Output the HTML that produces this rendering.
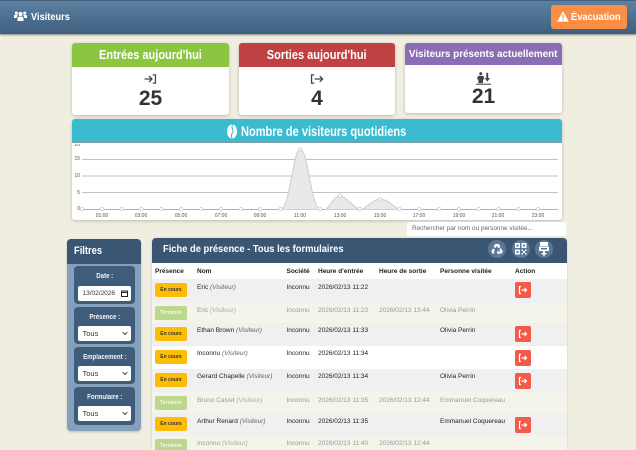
<!DOCTYPE html>
<html lang="fr"><head><meta charset="utf-8"><title>Visiteurs</title>
<style>
html,body{margin:0;padding:0}
body{width:636px;height:450px;overflow:hidden;background:#f0eee1;font-family:"Liberation Sans",sans-serif;position:relative;color:#222;filter:blur(.3px)}
div,svg,span{position:absolute;box-sizing:border-box}
.h{font-weight:700;color:#fff;white-space:nowrap;transform-origin:0 50%}
.card{background:#fff;border-radius:3px;box-shadow:0 1px 3px rgba(0,0,0,.22);overflow:hidden}
.card>.top{left:0;top:0;width:100%;text-align:center;color:#fff;font-weight:700;white-space:nowrap}
.t{display:inline-block;font-style:normal}
.num{left:0;width:100%;text-align:center;font-weight:700;font-size:21px;line-height:22px;color:#333}
.grp{left:6.5px;width:61.5px;background:#3f5c7b;border-radius:4px;text-align:center;color:#f2f4f7;font-weight:700;font-size:7px}
.grp>.l{left:0;width:100%;top:6px;line-height:9px;transform:scaleX(.87);white-space:nowrap}
.inp{left:4px;width:53.5px;height:15px;background:#fff;border-radius:2px;color:#333;font-weight:400;font-size:7.5px;line-height:15px;text-align:left;padding-left:5px}
.row{left:0;width:415px;font-size:6.5px;line-height:9px;white-space:nowrap}
.row span{top:var(--t);color:#222}
.row.fin span{color:#999}
.row em{color:#666}
.row.fin em{color:#aaa}
.b{left:3px;width:32px;border-radius:2px;font-size:5px;font-weight:700;text-align:center;height:14px;line-height:14px;top:var(--b)!important}
.row span.run{background:#fdbd07;color:#333}
.row.fin span.done{background:#bcd88e;color:#f2f6e8}
.act{left:363px;width:16px;height:16px;background:#f4594a;border-radius:2px;top:var(--a)}
.th{font-size:6.5px;font-weight:700;top:268px;color:#222;white-space:nowrap}
.xl{font-size:5px;color:#555;top:213px;width:20px;text-align:center}
.yl{font-size:5px;color:#555;left:72px;width:8px;text-align:right}
.ci{width:18px;height:18px;border-radius:50%;background:#5c7896;top:240px}
</style></head><body>

<div style="left:0;top:0;width:636px;height:34px;background:linear-gradient(#5c80a0,#3f5f80);border-top:1px solid #44607c;box-shadow:0 1px 2px rgba(0,0,0,.45)"></div>
<svg style="left:14px;top:11px" width="13" height="11" viewBox="0 0 13 11" fill="#fff"><circle cx="6.5" cy="3" r="2.1"/><circle cx="2.3" cy="2" r="1.5"/><circle cx="10.7" cy="2" r="1.5"/><path d="M3.5 10V7.5Q3.5 5.6 5.2 5.6H7.8Q9.5 5.6 9.5 7.5V10ZM0 7V5Q0 3.8 1.2 3.8H3.2L3.8 4.6Q2.6 5.4 2.6 7ZM13 7V5Q13 3.8 11.800 3.800H9.800L9.200 4.600Q10.400 5.400 10.400 7Z"/></svg>
<div class="h" style="left:31px;top:10px;font-size:10.5px;line-height:15px;transform:scaleX(.88)">Visiteurs</div>

<div style="left:551px;top:5px;width:76px;height:24px;background:#fb8e45;border-radius:3px"></div>
<svg style="left:557px;top:11px" width="12" height="11" viewBox="0 0 12 11"><path d="M6 .3 11.800 10.600H.2Z" fill="#fff"/><path d="M5.400 3.800h1.200v3.600H5.400zM5.400 8.200h1.200v1.200H5.400z" fill="#fb8e45"/></svg>
<div class="h" style="left:571px;top:10px;font-size:10px;line-height:15px;transform:scaleX(.93)">Évacuation</div>

<!-- cards -->
<div class="card" style="left:72px;top:43px;width:157px;height:72px">
  <div class="top" style="height:24px;background:#8cc640;font-size:12.5px;line-height:25px"><i class="t" style="transform:scaleX(.88)">Entrées aujourd'hui</i></div>
  <svg style="left:71px;top:31px" width="14" height="10" viewBox="0 0 14 11" fill="none" stroke="#444" stroke-width="1.400"><path d="M1 5.500H9M6 2.300 9.200 5.500 6 8.700M10 1H13V10H10"/></svg>
  <div class="num" style="top:45px">25</div>
</div>
<div class="card" style="left:239px;top:43px;width:156px;height:72px">
  <div class="top" style="height:24px;background:#c04141;font-size:12.5px;line-height:25px"><i class="t" style="transform:scaleX(.88)">Sorties aujourd'hui</i></div>
  <svg style="left:71px;top:31px" width="14" height="10" viewBox="0 0 14 11" fill="none" stroke="#444" stroke-width="1.400"><path d="M4 1H1V10H4M4.500 5.500H13M10 2.300 13.200 5.500 10 8.700"/></svg>
  <div class="num" style="top:45px">4</div>
</div>
<div class="card" style="left:405px;top:43px;width:157px;height:70px">
  <div class="top" style="height:22px;background:#8a6db5;font-size:10.400px;line-height:23px"><i class="t" style="transform:scaleX(.95)">Visiteurs présents actuellement</i></div>
  <svg style="left:71px;top:29px" width="15" height="13" viewBox="0 0 16 14" fill="#444"><circle cx="5" cy="1.800" r="1.600"/><path d="M2 4.200H8L9 8H7.500V12H2.500V8H1Z"/><path d="M11 1H13V6.500H15L12 10.500 9.500 6.500H11Z"/><rect x="0" y="12.600" width="16" height="1.100"/></svg>
  <div class="num" style="top:43px">21</div>
</div>

<!-- chart -->
<div class="card" style="left:72px;top:119px;width:490px;height:101px">
  <div class="top" style="height:24px;background:#3bbbcf;border-bottom:1px solid #7f9aa6;font-size:14px;line-height:25px;padding-left:14px"><i class="t" style="transform:scaleX(.79)">Nombre de visiteurs quotidiens</i></div>
</div>
<svg style="left:226px;top:124px" width="12" height="15" viewBox="0 0 12 16"><ellipse cx="6" cy="8" rx="5.400" ry="7.600" fill="#fff"/><path d="M6.800 .5C4 4 9 7 6.500 9.500 5 11 5.500 14 6 15.500" fill="none" stroke="#3bbbcf" stroke-width="1.100"/></svg>
<svg style="left:0;top:0" width="636" height="225" viewBox="0 0 636 225">
  <g stroke="#c2c2ca" stroke-width="1"><path d="M82 159.500H558M82 176H558M82 192.500H558"/></g>
  <path d="M82 209.500H558" stroke="#b0b0b8" stroke-width="1"/>
  <g fill="#e9e9ea" stroke="#cfcfda" stroke-width="1.100">
    <path d="M280.500 209.500C290 209 293 149 300.300 149 308 149 311 209 320.500 209.500Z"/>
    <path d="M326 209.500C332 203 335 196 340 196 345 196 352 205 359 209.500Z"/>
    <path d="M362 209.500C369 205 375 199 380 199 386 199 392 205 399 209.500Z"/>
  </g>
  <g fill="#fff" stroke="#cfcfd6" stroke-width=".9">
    <circle cx="82" cy="209" r="1.700"/><circle cx="102" cy="209" r="1.700"/><circle cx="121.700" cy="209" r="1.700"/><circle cx="141.500" cy="209" r="1.700"/><circle cx="161.400" cy="209" r="1.700"/><circle cx="181.200" cy="209" r="1.700"/><circle cx="201" cy="209" r="1.700"/><circle cx="221" cy="209" r="1.700"/><circle cx="240.800" cy="209" r="1.700"/><circle cx="260.500" cy="209" r="1.700"/><circle cx="280.500" cy="209" r="1.700"/><circle cx="300.300" cy="149.500" r="1.700"/><circle cx="320.200" cy="209" r="1.700"/><circle cx="340" cy="196" r="1.700"/><circle cx="359.800" cy="209" r="1.700"/><circle cx="379.800" cy="199.500" r="1.700"/><circle cx="399.500" cy="209" r="1.700"/><circle cx="419.300" cy="209" r="1.700"/><circle cx="439.200" cy="209" r="1.700"/><circle cx="459" cy="209" r="1.700"/><circle cx="478.800" cy="209" r="1.700"/><circle cx="498.700" cy="209" r="1.700"/><circle cx="518.500" cy="209" r="1.700"/><circle cx="538.300" cy="209" r="1.700"/>
  </g>
</svg>
<div class="yl" style="top:144px;height:2px;line-height:2px;overflow:hidden">20</div><div class="yl" style="top:156px">15</div><div class="yl" style="top:173px">10</div><div class="yl" style="top:190px">5</div><div class="yl" style="top:206px">0</div>
<div class="xl" style="left:92px">01:00</div><div class="xl" style="left:131px">03:00</div><div class="xl" style="left:171px">05:00</div><div class="xl" style="left:211px">07:00</div><div class="xl" style="left:250px">09:00</div><div class="xl" style="left:290px">11:00</div><div class="xl" style="left:330px">13:00</div><div class="xl" style="left:370px">15:00</div><div class="xl" style="left:409px">17:00</div><div class="xl" style="left:449px">19:00</div><div class="xl" style="left:488px">21:00</div><div class="xl" style="left:528px">23:00</div>

<!-- search -->
<div style="left:407px;top:222px;width:159px;height:14px;background:#fff;border-radius:2px;font-size:6.400px;line-height:14px;color:#666;padding-left:5px;white-space:nowrap">Rechercher par nom ou personne visitée...</div>

<!-- filters -->
<div style="left:67px;top:239px;width:74px;height:192px;background:#84a0bc;border-radius:4px;box-shadow:0 1px 2px rgba(0,0,0,.2)">
  <div style="left:0;top:0;width:74px;height:25px;background:#3a5672;border-radius:4px 4px 0 0"></div>
  <div class="h" style="left:7px;top:5px;font-size:11px;line-height:15px;transform:scaleX(.85)">Filtres</div>
  <div class="grp" style="top:27px;height:38px"><div class="l">Date :</div><div class="inp" style="top:20px;font-size:6.500px">13/02/2026
    <svg style="left:43px;top:4px" width="7" height="7" viewBox="0 0 7 7" fill="none" stroke="#222"><rect x=".5" y="1" width="6" height="5.500"/><path d="M.5 2.500H6.500"/></svg></div></div>
  <div class="grp" style="top:68px;height:37px"><div class="l">Présence :</div><div class="inp" style="top:19px">Tous
    <svg style="left:44px;top:5px" width="6" height="5" viewBox="0 0 6 5" fill="none" stroke="#444"><path d="M.7 1.200 3 3.500 5.300 1.200"/></svg></div></div>
  <div class="grp" style="top:108px;height:37px"><div class="l">Emplacement :</div><div class="inp" style="top:19px">Tous
    <svg style="left:44px;top:5px" width="6" height="5" viewBox="0 0 6 5" fill="none" stroke="#444"><path d="M.7 1.200 3 3.500 5.300 1.200"/></svg></div></div>
  <div class="grp" style="top:148px;height:38px"><div class="l">Formulaire :</div><div class="inp" style="top:19px">Tous
    <svg style="left:44px;top:5px" width="6" height="5" viewBox="0 0 6 5" fill="none" stroke="#444"><path d="M.7 1.200 3 3.500 5.300 1.200"/></svg></div></div>
</div>

<!-- table -->
<div style="left:152px;top:238px;width:415px;height:212px;background:#fff;border-radius:4px 4px 0 0;overflow:hidden;box-shadow:0 0 2px rgba(0,0,0,.15)">
  <div style="left:0;top:0;width:415px;height:25px;background:#3b5672"></div>
  <div style="left:0;top:41px;width:415px;height:171px;overflow:hidden">
    <div class="row" style="top:0;height:24px;background:#f0f0f0;--t:4px;--b:3.500px;--a:3px"><span class="b run" style="left:3px">En cours</span><span style="left:45px">Eric <em>(Visiteur)</em></span><span style="left:134.500px">Inconnu</span><span style="left:166px">2026/02/13 11:22</span><b class="act" style="position:absolute"></b></div>
    <div class="row fin" style="top:24px;height:20px;background:#f5f4ea;--t:3px;--b:3px"><span class="b done" style="left:3px">Terminée</span><span style="left:45px">Eric <em>(Visiteur)</em></span><span style="left:134.500px">Inconnu</span><span style="left:166px">2026/02/13 11:23</span><span style="left:227px">2026/02/13 13:44</span><span style="left:288px">Olivia Perrin</span></div>
    <div class="row" style="top:44px;height:23px;background:#f0f0f0;--t:3px;--b:3.500px;--a:3px"><span class="b run" style="left:3px">En cours</span><span style="left:45px">Ethan Brown <em>(Visiteur)</em></span><span style="left:134.500px">Inconnu</span><span style="left:166px">2026/02/13 11:33</span><span style="left:288px">Olivia Perrin</span><b class="act" style="position:absolute"></b></div>
    <div class="row" style="top:67px;height:23px;background:#fff;--t:3px;--b:3.500px;--a:3.500px"><span class="b run" style="left:3px">En cours</span><span style="left:45px">Inconnu <em>(Visiteur)</em></span><span style="left:134.500px">Inconnu</span><span style="left:166px">2026/02/13 11:34</span><b class="act" style="position:absolute"></b></div>
    <div class="row" style="top:90px;height:23px;background:#f0f0f0;--t:3px;--b:3.500px;--a:3.500px"><span class="b run" style="left:3px">En cours</span><span style="left:45px">Gerard Chapelle <em>(Visiteur)</em></span><span style="left:134.500px">Inconnu</span><span style="left:166px">2026/02/13 11:34</span><span style="left:288px">Olivia Perrin</span><b class="act" style="position:absolute"></b></div>
    <div class="row fin" style="top:113px;height:21px;background:#f5f4ea;--t:3.500px;--b:3.500px"><span class="b done" style="left:3px">Terminée</span><span style="left:45px">Bruno Calvet <em>(Visiteur)</em></span><span style="left:134.500px">Inconnu</span><span style="left:166px">2026/02/13 11:35</span><span style="left:227px">2026/02/13 12:44</span><span style="left:288px">Emmanuel Coquereau</span></div>
    <div class="row" style="top:134px;height:23px;background:#f0f0f0;--t:3.500px;--b:3.500px;--a:3.500px"><span class="b run" style="left:3px">En cours</span><span style="left:45px">Arthur Renard <em>(Visiteur)</em></span><span style="left:134.500px">Inconnu</span><span style="left:166px">2026/02/13 11:35</span><span style="left:288px">Emmanuel Coquereau</span><b class="act" style="position:absolute"></b></div>
    <div class="row fin" style="top:157px;height:20px;background:#f5f4ea;--t:3px;--b:3px"><span class="b done" style="left:3px">Terminée</span><span style="left:45px">Inconnu <em>(Visiteur)</em></span><span style="left:134.500px">Inconnu</span><span style="left:166px">2026/02/13 11:40</span><span style="left:227px">2026/02/13 12:44</span></div>
  </div>
</div>
<div class="h" style="left:163px;top:242px;font-size:10.500px;line-height:15px;transform:scaleX(.89)">Fiche de présence - Tous les formulaires</div>
<div class="th" style="left:155px">Présence</div><div class="th" style="left:197px">Nom</div><div class="th" style="left:286.500px">Société</div><div class="th" style="left:318px">Heure d'entrée</div><div class="th" style="left:379px">Heure de sortie</div><div class="th" style="left:440px">Personne visitée</div><div class="th" style="left:515px">Action</div>

<div class="ci" style="left:488px"></div><div class="ci" style="left:511.500px"></div><div class="ci" style="left:535px"></div>
<svg style="left:491px;top:243px" width="12" height="12" viewBox="0 0 12 12" fill="#fff"><path d="M4.200 1H7.800L9.500 4 7.300 5.200 5.900 2.800 4.700 5 2.500 3.800ZM9.800 5 11.800 8.500 10.500 10.500H7.500V12L5.800 9.500 7.500 7V8.500H9.700L8.400 6.200ZM.3 8.500 1.900 5.500 4 6.700 2.800 8.800 3.700 10.500H1.500Z"/></svg>
<svg style="left:514px;top:243px" width="13" height="12" viewBox="0 0 13 12" fill="#fff"><path fill-rule="evenodd" d="M1 0H6V5H1ZM2.500 1.500V3.500H4.500V1.500ZM7.500 0H12.500V5H7.500ZM9 1.500V3.500H11V1.500ZM1 6.500H6V11.500H1ZM2.500 8V10H4.500V8Z"/><path d="M7.500 6.500H9V8H7.500ZM11 6.500H12.500V8H11ZM9 8H11V10H9ZM7.500 10H9V11.500H7.500ZM11 10H12.500V11.500H11Z"/></svg>
<svg style="left:538px;top:242px" width="12" height="14" viewBox="0 0 12 14" fill="#fff"><path d="M2 0H10V4H2ZM1 4.500H11V9H1Z"/><path d="M5 9H7V11H9L6 14 3 11H5Z"/><rect x="3" y="6" width="6" height="1.500" fill="#5c7896"/></svg>

<svg style="left:515px;top:282px" width="16" height="16" viewBox="0 0 16 16"><use href="#x"/></svg>
<svg style="left:515px;top:326px" width="16" height="16" viewBox="0 0 16 16"><use href="#x"/></svg>
<svg style="left:515px;top:350px" width="16" height="16" viewBox="0 0 16 16"><use href="#x"/></svg>
<svg style="left:515px;top:373px" width="16" height="16" viewBox="0 0 16 16"><use href="#x"/></svg>
<svg style="left:515px;top:417px" width="16" height="16" viewBox="0 0 16 16"><use href="#x"/></svg>
<svg style="left:0;top:0" width="0" height="0"><defs><g id="x" fill="none" stroke="#fff" stroke-width="1.200"><path d="M6 4.500H4.500V11.500H6M6.500 8H11.500M9.500 6 11.500 8 9.500 10"/></g></defs></svg>
</body></html>
